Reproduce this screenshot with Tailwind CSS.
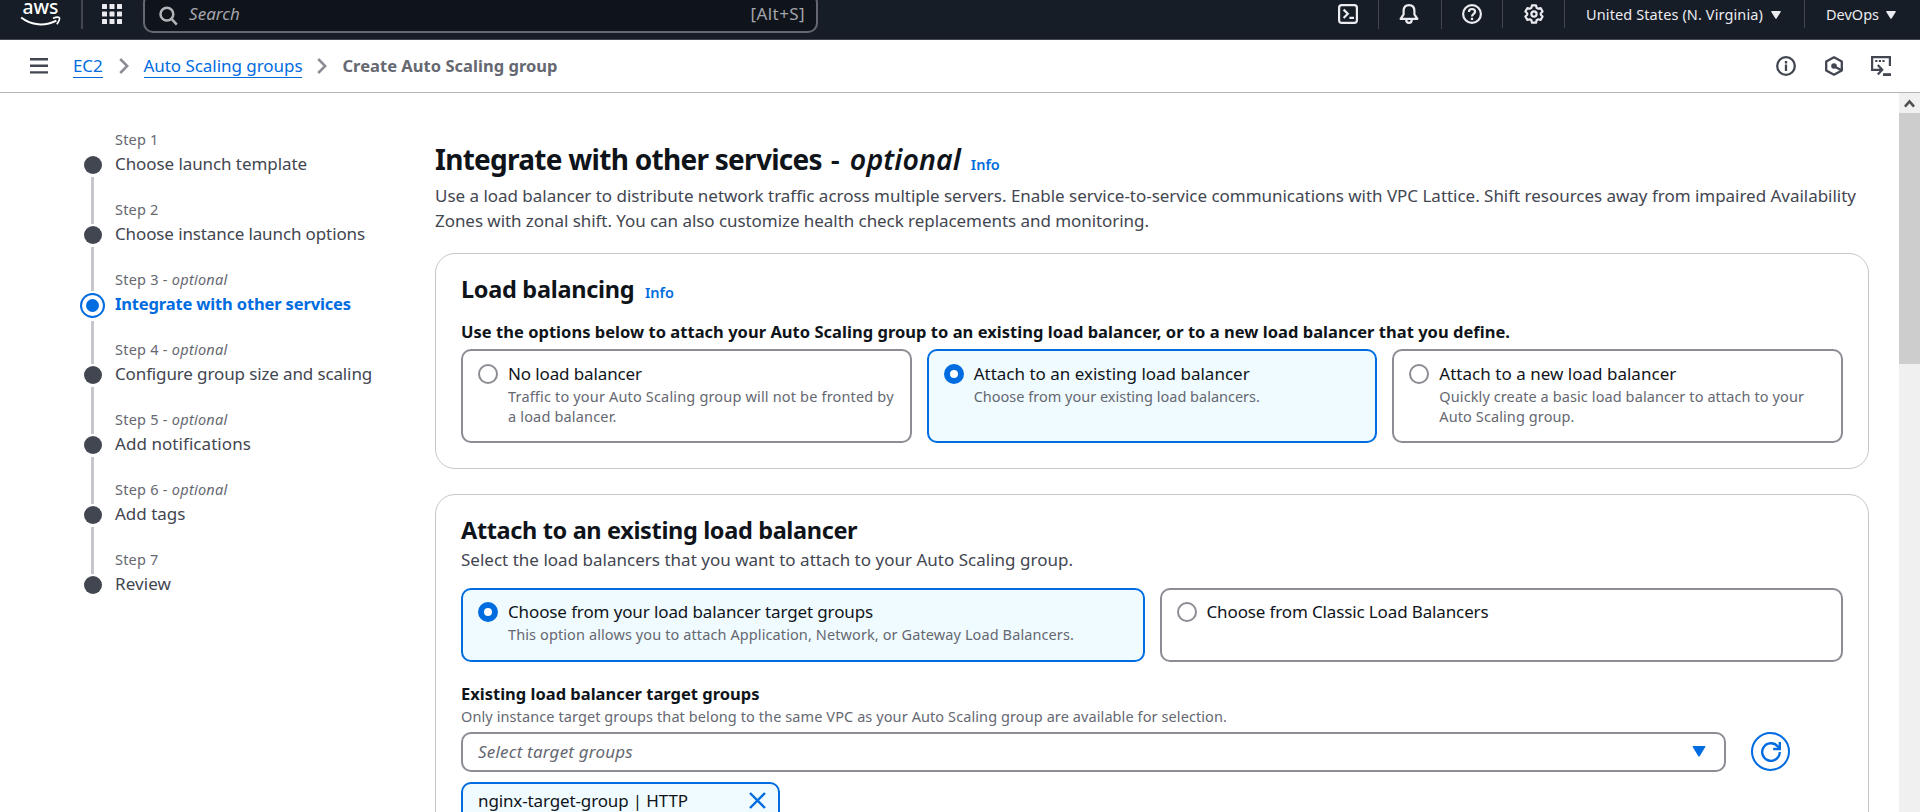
<!DOCTYPE html>
<html lang="en">
<head>
<meta charset="utf-8">
<title>Create Auto Scaling group</title>
<script src="https://cdn.jsdelivr.net/npm/@tailwindcss/browser@4"></script>
</head>
<body class="flex h-[812px] w-[1920px] flex-col overflow-hidden bg-white font-['Noto_Sans',sans-serif] text-[17px] leading-[25px] text-[#0f141a]">

<header class="flex h-10 shrink-0 items-start border-b border-[#424650] bg-[#161d26] text-[#ebebf0]">
  <svg class="ml-5 h-[29px] w-[42px] shrink-0" viewBox="0 0 42 29" fill="none">
    <text x="2.5" y="13.6" font-size="20" font-weight="500" textLength="36" lengthAdjust="spacingAndGlyphs" fill="#fff">aws</text>
    <path d="M1.2 17.6C11 25.6 25 26.4 36.4 20.6" stroke="#fff" stroke-width="2"/>
    <path d="M33 18.2C36 17 38.6 16.8 39.4 17.8C40 18.8 38.8 22 36.8 24.2" stroke="#fff" stroke-width="1.7"/>
  </svg>
  <div class="ml-[19px] h-[29px] w-[2px] bg-[#424650]"></div>
  <svg class="mt-1 ml-[19px] size-5 shrink-0" viewBox="0 0 20 20" fill="#ebebf0">
    <rect width="5" height="5" rx=".6"/><rect x="7.5" width="5" height="5" rx=".6"/><rect x="15" width="5" height="5" rx=".6"/>
    <rect y="7.5" width="5" height="5" rx=".6"/><rect x="7.5" y="7.5" width="5" height="5" rx=".6"/><rect x="15" y="7.5" width="5" height="5" rx=".6"/>
    <rect y="15" width="5" height="5" rx=".6"/><rect x="7.5" y="15" width="5" height="5" rx=".6"/><rect x="15" y="15" width="5" height="5" rx=".6"/>
  </svg>
  <div class="-mt-[7px] ml-[21px] flex h-[40px] w-[675px] items-start rounded-[10px] border-2 border-[#656871] bg-[#0f141a] pt-[6px] pl-[14px]">
    <svg class="mt-[5px] size-5 shrink-0" viewBox="0 0 20 20" fill="none" stroke="#b4b4bb" stroke-width="2.5"><circle cx="7.9" cy="8.2" r="6.4"/><path d="M12.5 12.8L17.8 18.6"/></svg>
    <span class="ml-[10px] tracking-[0.05px] text-[#a4a4ad] italic">Search</span>
    <span class="mr-[11px] ml-auto tracking-[0.4px] text-[#a4a4ad]">[Alt+S]</span>
  </div>
  <div class="ml-auto flex items-start">
    <svg class="mt-1 size-5" viewBox="0 0 20 20" fill="none" stroke="#ebebf0" stroke-width="2.2"><rect x="1.1" y="1.1" width="17.8" height="17.8" rx="2.6"/><path d="M5.6 5.6L9.8 9.8L5.6 14M11.4 13.8H16"/></svg>
    <div class="ml-5 h-[29px] w-px bg-[#424650]"></div>
    <svg class="mt-1 ml-5 size-5" viewBox="0 0 20 20" fill="none" stroke="#ebebf0" stroke-width="2.2" stroke-linejoin="round"><path d="M10 1.2C6.6 1.2 4.6 3.6 4.6 7V10.4L1.6 14.8H18.4L15.4 10.4V7C15.4 3.6 13.4 1.2 10 1.2Z"/><path d="M7.2 15.4C7.2 17.6 8.4 18.8 10 18.8S12.8 17.6 12.8 15.4"/></svg>
    <div class="ml-[22px] h-[29px] w-px bg-[#424650]"></div>
    <svg class="mt-1 ml-5 size-5" viewBox="0 0 20 20" fill="none" stroke="#ebebf0" stroke-width="2.2"><circle cx="10" cy="10" r="8.9"/><path d="M6.9 8C6.9 6 8.2 5 10 5S13.1 6.2 13.1 7.8C13.1 9.8 10 10 10 12.4M10 13.8V16"/></svg>
    <div class="ml-5 h-7 w-px bg-[#424650]"></div>
    <svg class="mt-1 ml-[21px] size-5" viewBox="0 0 20 20" fill="none" stroke="#ebebf0" stroke-width="2.2" stroke-linejoin="round"><path d="M8 1.3H12L12.6 3.8L14.2 4.7L16.6 4L18.6 7.5L16.8 9.2V10.8L18.6 12.5L16.6 16L14.2 15.3L12.6 16.2L12 18.7H8L7.4 16.2L5.8 15.3L3.4 16L1.4 12.5L3.2 10.8V9.2L1.4 7.5L3.4 4L5.8 4.7L7.4 3.8Z"/><circle cx="10" cy="10" r="2.6"/></svg>
    <div class="ml-5 h-7 w-px bg-[#424650]"></div>
    <span class="mt-[2px] ml-[21px] w-[177px] text-[14.5px] leading-6 tracking-[0.11px] whitespace-nowrap">United States (N. Virginia)</span>
    <svg class="mt-[11px] ml-[8px] h-2 w-[10px]" viewBox="0 0 10 8" fill="#ebebf0"><path d="M.8 0H9.2Q10.2 0 9.7 .9L5.6 7.4Q5 8.2 4.4 7.4L.3 .9Q-.2 0 .8 0Z"/></svg>
    <div class="ml-[23px] h-7 w-px bg-[#424650]"></div>
    <span class="mt-[2px] ml-[21px] w-[53px] text-[14.5px] leading-6 whitespace-nowrap">DevOps</span>
    <svg class="mt-[11px] mr-[24px] ml-[7px] h-2 w-[10px]" viewBox="0 0 10 8" fill="#ebebf0"><path d="M.8 0H9.2Q10.2 0 9.7 .9L5.6 7.4Q5 8.2 4.4 7.4L.3 .9Q-.2 0 .8 0Z"/></svg>
  </div>
</header>

<nav class="flex h-[53px] shrink-0 items-center border-b border-[#b4b4bb] pb-px pl-[30px]">
  <svg class="h-4 w-[18px]" viewBox="0 0 18 16" fill="#424650"><path d="M0 0H18V2.4H0ZM0 6.6H18V9H0ZM0 13.2H18V15.6H0Z"/></svg>
  <a class="ml-[25px] h-[25px] border-b border-[#006ce0] tracking-[-0.14px] text-[#006ce0]">EC2</a>
  <svg class="ml-4 h-4 w-[10px]" viewBox="0 0 10 16" fill="none" stroke="#8c8c94" stroke-width="2.5"><path d="M1.2 1L8.2 8L1.2 15"/></svg>
  <a class="ml-[15px] h-[25px] border-b border-[#006ce0] tracking-[-0.05px] text-[#006ce0]">Auto Scaling groups</a>
  <svg class="ml-[15px] h-4 w-[10px]" viewBox="0 0 10 16" fill="none" stroke="#8c8c94" stroke-width="2.5"><path d="M1.2 1L8.2 8L1.2 15"/></svg>
  <span class="ml-[15px] text-[16.5px] font-bold tracking-[0.03px] text-[#656871]">Create Auto Scaling group</span>
  <div class="mr-[29px] ml-auto flex items-center">
    <svg class="size-5" viewBox="0 0 20 20" fill="none" stroke="#424650" stroke-width="2.3"><circle cx="10" cy="10" r="8.8"/><path d="M10 8.6V15M10 5V7.4"/></svg>
    <svg class="ml-7 size-5" viewBox="0 0 20 20" fill="none" stroke="#424650" stroke-width="2.3"><path d="M10 1.3L17.8 5.6V14.4L10 18.7L2.2 14.4V5.6Z" stroke-linejoin="round"/><circle cx="10" cy="10" r="2.8" fill="#424650" stroke="none"/><path d="M10.4 10.4L17 14"/></svg>
    <svg class="ml-[27px] size-5" viewBox="0 0 20 20" fill="none" stroke="#424650" stroke-width="2.2"><path d="M18.9 10V1.1H1.1V13.8H10.6M6.8 9L11.2 13.8L6.8 18.4"/><path d="M12 18.6H20" stroke-width="2.8"/><path d="M4.2 5.1H6.4M7.8 5.1H10M11.4 5.1H13.6" stroke-width="2"/></svg>
  </div>
</nav>

<div class="flex min-h-0 flex-1">
  <aside class="flex w-[435px] shrink-0 pt-9 pl-20">
    <div class="flex w-[25px] flex-col items-center pt-[27px]">
      <span class="size-[18px] shrink-0 rounded-full bg-[#424650]"></span>
      <span class="mt-[3px] mb-[2px] h-[47px] w-[3px] shrink-0 bg-[#c6c6cd]"></span>
      <span class="size-[18px] shrink-0 rounded-full bg-[#424650]"></span>
      <span class="mt-[3px] mb-[2px] h-[44px] w-[3px] shrink-0 bg-[#c6c6cd]"></span>
      <span class="flex size-[25px] shrink-0 items-center justify-center rounded-full border-2 border-[#006ce0]"><i class="size-[13px] rounded-full bg-[#006ce0]"></i></span>
      <span class="mt-[3px] mb-[2px] h-[43px] w-[3px] shrink-0 bg-[#c6c6cd]"></span>
      <span class="size-[18px] shrink-0 rounded-full bg-[#424650]"></span>
      <span class="mt-[3px] mb-[2px] h-[47px] w-[3px] shrink-0 bg-[#c6c6cd]"></span>
      <span class="size-[18px] shrink-0 rounded-full bg-[#424650]"></span>
      <span class="mt-[3px] mb-[2px] h-[47px] w-[3px] shrink-0 bg-[#c6c6cd]"></span>
      <span class="size-[18px] shrink-0 rounded-full bg-[#424650]"></span>
      <span class="mt-[3px] mb-[2px] h-[47px] w-[3px] shrink-0 bg-[#c6c6cd]"></span>
      <span class="size-[18px] shrink-0 rounded-full bg-[#424650]"></span>
    </div>
    <ol class="ml-[10px] flex flex-col gap-[23px] whitespace-nowrap text-[#424650]">
      <li><div class="mb-[2px] text-[14.5px] leading-5 tracking-[0.18px] text-[#656871]">Step 1</div><div class="tracking-[-0.08px]">Choose launch template</div></li>
      <li><div class="mb-[2px] text-[14.5px] leading-5 tracking-[0.18px] text-[#656871]">Step 2</div><div class="tracking-[-0.12px]">Choose instance launch options</div></li>
      <li><div class="mb-[2px] text-[14.5px] leading-5 tracking-[0.25px] text-[#656871]">Step 3 - <i>optional</i></div><div class="text-[16.5px] font-bold tracking-[-0.15px] text-[#006ce0]">Integrate with other services</div></li>
      <li><div class="mb-[2px] text-[14.5px] leading-5 tracking-[0.25px] text-[#656871]">Step 4 - <i>optional</i></div><div class="tracking-[-0.13px]">Configure group size and scaling</div></li>
      <li><div class="mb-[2px] text-[14.5px] leading-5 tracking-[0.25px] text-[#656871]">Step 5 - <i>optional</i></div><div class="tracking-[0.06px]">Add notifications</div></li>
      <li><div class="mb-[2px] text-[14.5px] leading-5 tracking-[0.25px] text-[#656871]">Step 6 - <i>optional</i></div><div>Add tags</div></li>
      <li><div class="mb-[2px] text-[14.5px] leading-5 tracking-[0.18px] text-[#656871]">Step 7</div><div class="tracking-[0.09px]">Review</div></li>
    </ol>
  </aside>

  <main class="w-[1434px] shrink-0 overflow-hidden pt-12">
    <h1 class="flex h-9 items-baseline text-[28px] leading-9 font-bold whitespace-nowrap"><span class="tracking-[-0.72px]">Integrate with other services</span><span class="ml-[9px] w-[11px] font-semibold">-</span><span class="ml-2 w-[111px] text-[28.5px] font-semibold tracking-[0.1px] italic">optional</span><a class="ml-[10px] text-[14.5px] leading-5 font-semibold text-[#006ce0]">Info</a></h1>
    <p class="mt-[6px] whitespace-nowrap text-[#424650]"><span class="tracking-[-0.025px]">Use a load balancer to distribute network traffic across multiple servers. Enable service-to-service communications with VPC Lattice. Shift resources away from impaired Availability</span><br><span class="tracking-[-0.056px]">Zones with zonal shift. You can also customize health check replacements and monitoring.</span></p>

    <section class="mt-5 h-[216px] rounded-[20px] border border-[#c6c6cd] px-[25px] pt-5">
      <h2 class="flex h-[30px] items-baseline text-[23.5px] leading-[30px] font-bold"><span class="w-[173px] tracking-[-0.3px] whitespace-nowrap">Load balancing</span><a class="ml-[11px] text-[14.5px] leading-5 font-semibold text-[#006ce0]">Info</a></h2>
      <div class="mt-[15px] text-[16.5px] font-bold tracking-[0.026px] whitespace-nowrap">Use the options below to attach your Auto Scaling group to an existing load balancer, or to a new load balancer that you define.</div>
      <div class="mt-[5px] grid h-[94px] grid-cols-3 gap-[15px]">
        <div class="flex rounded-[10px] border-2 border-[#8c8c94] pt-[10px] pl-[15px] whitespace-nowrap">
          <span class="mt-[3px] size-5 shrink-0 rounded-full border-2 border-[#8c8c94]"></span>
          <div class="ml-[10px]"><div class="tracking-[-0.12px]">No load balancer</div><div class="text-[14.5px] leading-5 tracking-[0.17px] text-[#656871]">Traffic to your Auto Scaling group will not be fronted by<br>a load balancer.</div></div>
        </div>
        <div class="flex rounded-[10px] border-2 border-[#006ce0] bg-[#f0fbff] pt-[10px] pl-[15px] whitespace-nowrap">
          <span class="mt-[3px] size-5 shrink-0 rounded-full border-[6px] border-[#006ce0] bg-white"></span>
          <div class="ml-[10px]"><div>Attach to an existing load balancer</div><div class="text-[14.5px] leading-5 text-[#656871]">Choose from your existing load balancers.</div></div>
        </div>
        <div class="flex rounded-[10px] border-2 border-[#8c8c94] pt-[10px] pl-[15px] whitespace-nowrap">
          <span class="mt-[3px] size-5 shrink-0 rounded-full border-2 border-[#8c8c94]"></span>
          <div class="ml-[10px]"><div class="tracking-[0.02px]">Attach to a new load balancer</div><div class="text-[14.5px] leading-5 tracking-[0.1px] text-[#656871]">Quickly create a basic load balancer to attach to your<br>Auto Scaling group.</div></div>
        </div>
      </div>
    </section>

    <section class="mt-[25px] h-[400px] rounded-[20px] border border-[#c6c6cd] px-[25px] pt-5">
      <h2 class="text-[23.5px] leading-[30px] font-bold tracking-[-0.36px]">Attach to an existing load balancer</h2>
      <p class="mt-[2px] tracking-[0.013px] text-[#424650]">Select the load balancers that you want to attach to your Auto Scaling group.</p>
      <div class="mt-4 grid h-[74px] grid-cols-2 gap-[15px]">
        <div class="flex rounded-[10px] border-2 border-[#006ce0] bg-[#f0fbff] pt-[9px] pl-[15px] whitespace-nowrap">
          <span class="mt-[3px] size-5 shrink-0 rounded-full border-[6px] border-[#006ce0] bg-white"></span>
          <div class="ml-[10px]"><div class="tracking-[-0.12px]">Choose from your load balancer target groups</div><div class="text-[14.5px] leading-5 tracking-[0.104px] text-[#656871]">This option allows you to attach Application, Network, or Gateway Load Balancers.</div></div>
        </div>
        <div class="flex rounded-[10px] border-2 border-[#8c8c94] pt-[9px] pl-[15px] whitespace-nowrap">
          <span class="mt-[3px] size-5 shrink-0 rounded-full border-2 border-[#8c8c94]"></span>
          <div class="ml-[10px] tracking-[-0.134px]">Choose from Classic Load Balancers</div>
        </div>
      </div>
      <div class="mt-[19px] text-[16.5px] font-bold">Existing load balancer target groups</div>
      <div class="text-[14.5px] leading-5 tracking-[0.094px] text-[#656871]">Only instance target groups that belong to the same VPC as your Auto Scaling group are available for selection.</div>
      <div class="mt-[6px] flex">
        <div class="flex h-10 w-[1265px] items-center rounded-[10px] border-2 border-[#8c8c94] pb-px pl-[15px]">
          <span class="tracking-[0.2px] text-[#656871] italic">Select target groups</span>
          <svg class="mr-[18px] ml-auto h-[11px] w-[14px]" viewBox="0 0 14 11" fill="#006ce0"><path d="M1.4 0H12.6Q14 0 13.3 1.1L7.8 10Q7 11.2 6.2 10L.7 1.1Q0 0 1.4 0Z"/></svg>
        </div>
        <div class="ml-[25px] flex size-[39px] items-center justify-center rounded-full border-2 border-[#006ce0]">
          <svg class="size-5" viewBox="0 0 20 20" fill="none" stroke="#006ce0" stroke-width="2.4"><path d="M18.8 10A8.8 8.8 0 1 1 16.6 4.2L18.6 6.4"/><path d="M18.8 0V7H12.2"/></svg>
        </div>
      </div>
      <div class="mt-[10px] flex h-[60px] w-[319px] items-start rounded-[10px] border-2 border-[#006ce0] bg-[#f0fbff] pt-1 pl-[15px] whitespace-nowrap">
        <span class="tracking-[-0.13px]">nginx-target-group | HTTP</span>
        <svg class="mt-1 mr-[12px] ml-auto size-[17px]" viewBox="0 0 17 17" fill="none" stroke="#006ce0" stroke-width="2.4"><path d="M1 1L16 16M16 1L1 16"/></svg>
      </div>
    </section>
  </main>

  <div class="ml-auto flex w-[21px] flex-col bg-[#f0f0f0]">
    <div class="flex h-5 items-center justify-center"><svg class="h-[9px] w-[11px]" viewBox="0 0 11 9" fill="none" stroke="#505050" stroke-width="2.6"><path d="M.9 7.6L5.5 2.4L10.1 7.6"/></svg></div>
    <div class="h-[251px] bg-[#cdcdcd]"></div>
  </div>
</div>
</body>
</html>
